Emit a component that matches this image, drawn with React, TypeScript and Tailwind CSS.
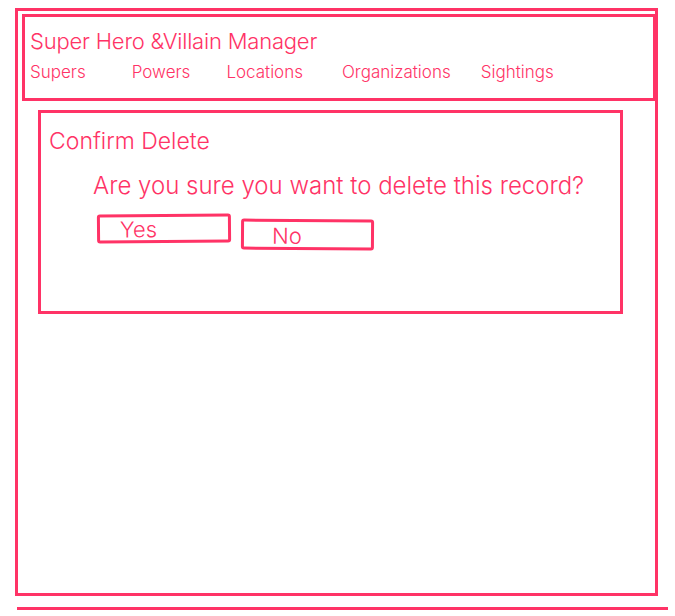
import React from 'react';

const navItems = [
  { label: 'Supers', ml: 'ml-0' },
  { label: 'Powers', ml: 'ml-[46px]' },
  { label: 'Locations', ml: 'ml-[36px]' },
  { label: 'Organizations', ml: 'ml-[39px]' },
  { label: 'Sightings', ml: 'ml-[30px]' },
];

const App: React.FC = () => {
  return (
    <div className="h-[616px] w-[675px] bg-white pt-2 pl-[15px] text-[#ff3366] font-['Inter',sans-serif] overflow-hidden">
      {/* Page frame */}
      <div className="w-[643px] h-[588px] border-[3px] border-[#ff3366] pt-[3px] pl-[4px]">
        {/* Header */}
        <div className="w-[634px] h-[87px] border-[3px] border-[#ff3366] pl-[5px] pt-[9px]">
          <h1 className="text-[22px] leading-[30px] font-light tracking-[-0.2px]">Super Hero &amp;Villain Manager</h1>
          <nav className="flex mt-[5px] text-[17px] leading-[22px] font-light">
            {navItems.map((n) => (
              <span key={n.label} className={n.ml}>
                {n.label}
              </span>
            ))}
          </nav>
        </div>

        {/* Confirm dialog */}
        <div className="ml-[16px] mt-[9px] w-[585px] h-[204px] border-[3px] border-[#ff3366] pl-[8px] pt-[13px]">
          <h2 className="text-[23px] leading-[30px] font-light">Confirm Delete</h2>
          <p className="ml-[44px] mt-[15px] text-[24px] leading-[30px] font-light">
            Are you sure you want to delete this record?
          </p>
          <div className="flex items-start ml-[48px] mt-[13px]">
            <button className="w-[134px] h-[29px] border-[3px] border-[#ff3366] rounded-[3px] text-[22px] font-light leading-[20px] pl-[20px] text-left -rotate-[0.5deg]">
              Yes
            </button>
            <button className="ml-[10px] mt-[5px] w-[133px] h-[31px] border-[3px] border-[#ff3366] rounded-[3px] text-[22px] font-light leading-[28px] pl-[28px] text-left rotate-[0.4deg]">
              No
            </button>
          </div>
        </div>
      </div>
      <div className="mt-[11px] ml-[2px] w-[651px] h-[3px] bg-[#ff3366]" />
    </div>
  );
};

export default App;
